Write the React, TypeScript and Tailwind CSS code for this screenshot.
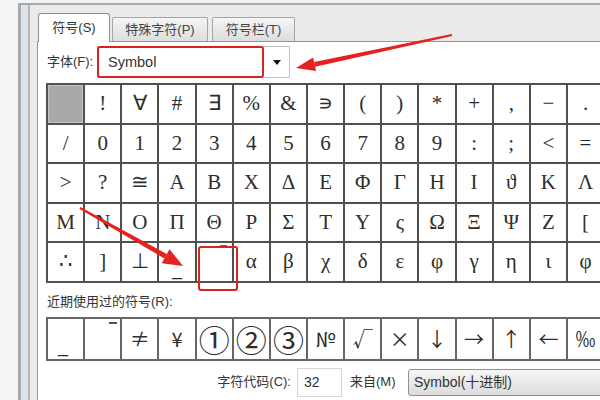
import React from "react";

const rows: string[][] = [
  ["", "!", "∀", "#", "∃", "%", "&", "∍", "(", ")", "*", "+", ",", "−", "."],
  ["/", "0", "1", "2", "3", "4", "5", "6", "7", "8", "9", ":", ";", "<", "="],
  [">", "?", "≅", "A", "B", "X", "Δ", "E", "Φ", "Γ", "H", "I", "ϑ", "K", "Λ"],
  ["M", "N", "O", "Π", "Θ", "P", "Σ", "T", "Y", "ς", "Ω", "Ξ", "Ψ", "Z", "["],
  ["∴", "]", "⊥", "_", "SEL", "α", "β", "χ", "δ", "ε", "φ", "γ", "η", "ι", "φ"],
];

const recent: string[] = ["_", "OVER", "≠", "¥", "①", "②", "③", "№", "√", "×", "↓", "→", "↑", "←", "‰"];

function GridCell({ ch }: { ch: string }) {
  if (ch === "") {
    return <div className="h-[37.5px] bg-[#a9a9a9] border border-[#c4c4c4]" />;
  }
  if (ch === "SEL") {
    return (
      <div className="relative h-[37.5px] bg-white">
        <span className="absolute top-[2px] right-[5px] w-[7px] h-[2px] bg-[#666]" />
      </div>
    );
  }
  if (ch === "_") {
    return (
      <div className="h-[37.5px] bg-white flex items-end justify-center pb-[2px] text-[20px] leading-none font-['Liberation_Serif',serif] text-[#2e2e2e]">
        _
      </div>
    );
  }
  return (
    <div className="h-[37.5px] bg-white flex items-center justify-center text-[21px] leading-none font-['Liberation_Serif',serif] text-[#2e2e2e]">
      {ch}
    </div>
  );
}

function RecentCell({ ch }: { ch: string }) {
  if (ch === "_") {
    return (
      <div className="h-[40px] bg-white flex items-end justify-start pl-[10px] pb-[4px] text-[18px] leading-none font-['Liberation_Sans',sans-serif] text-[#2e2e2e]">
        _
      </div>
    );
  }
  if (ch === "OVER") {
    return (
      <div className="relative h-[40px] bg-white">
        <span className="absolute top-[3px] right-[3px] w-[8px] h-[2px] bg-[#555]" />
      </div>
    );
  }
  const circled = ch === "①" || ch === "②" || ch === "③";
  return (
    <div
      className={
        circled
          ? "h-[40px] bg-white flex items-center justify-center text-[31px] leading-none font-['Noto_Sans_CJK_SC',sans-serif] text-[#2e2e2e]"
          : "h-[40px] bg-white flex items-center justify-center text-[20px] leading-none font-['Noto_Sans_CJK_SC',sans-serif] text-[#2e2e2e]"
      }
    >
      {ch}
    </div>
  );
}

export default function App() {
  return (
    <div className="relative w-[600px] h-[400px] overflow-hidden bg-[#f4f4f4] text-[#333] font-['Liberation_Sans','Noto_Sans_CJK_SC',sans-serif]">
      <div className="h-full pl-[18px] pt-[3px]">
        <div className="h-full border-l-[3px] border-t-2 border-[#a9a9a9] bg-[#dce4ec] pl-[7px]">
          <div className="h-full flex flex-col border-l-2 border-[#b4b4b4] bg-[#ebebeb] pl-[7px]">
            {/* Tabs */}
            <div className="flex items-end h-[36px] shrink-0 pl-px">
              <div className="relative top-px z-10 h-[29px] w-[72px] bg-white border border-b-0 border-[#8e8e8e] rounded-t-[3px] flex items-center justify-center text-[13px] text-[#333] whitespace-nowrap">
                符号(S)
              </div>
              <div className="ml-[2px] h-[24px] w-[96px] border border-b-0 border-[#a5a5a5] rounded-t-[2px] bg-linear-to-b from-[#f5f5f5] to-[#dddddd] flex items-center justify-center text-[13px] text-[#444] whitespace-nowrap">
                特殊字符(P)
              </div>
              <div className="ml-[4px] h-[24px] w-[83px] border border-b-0 border-[#a5a5a5] rounded-t-[2px] bg-linear-to-b from-[#f5f5f5] to-[#dddddd] flex items-center justify-center text-[13px] text-[#444] whitespace-nowrap">
                符号栏(T)
              </div>
            </div>

            {/* Panel */}
            <div className="flex-1 min-w-0 flex flex-col bg-white border-l border-t border-[#959595] pl-[8px]">
              {/* Font row */}
              <div className="mt-[4px] h-[32px] flex items-center shrink-0">
                <div className="ml-px w-[50px] shrink-0 text-[13px] text-[#333] whitespace-nowrap">字体(F):</div>
                <div className="relative flex h-[32px] w-[193px] shrink-0 border border-[#c2c2c2] bg-white">
                  <div className="flex-1 flex items-center pl-[10px] pt-px text-[14.5px] text-[#333] font-['Liberation_Sans',sans-serif]">
                    Symbol
                  </div>
                  <div className="w-[24px] flex items-center justify-center">
                    <svg width="8" height="5" viewBox="0 0 8 5">
                      <polygon points="0,0 8,0 4,5" fill="#111" />
                    </svg>
                  </div>
                  <div className="absolute left-[-1px] top-[-1px] h-[32px] w-[167px] border-2 border-[#d8241c] rounded-[3px]" />
                </div>
              </div>

              {/* Symbol grid */}
              <div className="mt-[5px] w-max shrink-0 grid grid-cols-[repeat(15,35.15px)] gap-[2px] p-[2px] bg-[#505050]">
                {rows.flat().map((ch, i) => (
                  <GridCell key={i} ch={ch} />
                ))}
              </div>

              {/* Recent label */}
              <div className="mt-[11px] h-[16px] leading-[16px] ml-px text-[13px] text-[#333] shrink-0 whitespace-nowrap">
                近期使用过的符号(R):
              </div>

              {/* Recent grid */}
              <div className="mt-[7px] w-max shrink-0 grid grid-cols-[repeat(15,35.15px)] gap-[2px] p-[2px] bg-[#666]">
                {recent.map((ch, i) => (
                  <RecentCell key={i} ch={ch} />
                ))}
              </div>

              {/* Bottom row */}
              <div className="mt-[7px] h-[29px] flex items-center shrink-0">
                <div className="ml-[160px] w-[91px] shrink-0 pr-[6px] text-right text-[13px] text-[#333] whitespace-nowrap">字符代码(C):</div>
                <div className="w-[45px] h-[29px] shrink-0 border border-[#d6d6d6] bg-white flex items-center pl-[6px] text-[14px] text-[#333]">
                  32
                </div>
                <div className="ml-[8px] w-[58px] shrink-0 text-[13px] text-[#333] whitespace-nowrap">来自(M)</div>
                <div className="w-[220px] h-[27px] shrink-0 border border-[#8f8f8f] rounded-[3px] bg-linear-to-b from-[#f6f6f6] to-[#dcdcdc] flex items-center pl-[5px] text-[14px] text-[#333] whitespace-nowrap">
                  Symbol(十进制)
                </div>
              </div>
            </div>
          </div>
        </div>
      </div>

      {/* Selected-cell highlight */}
      <div className="absolute left-[198px] top-[246px] w-[40px] h-[45px] border-2 border-[#d8241c] rounded-[3px]" />

      {/* Red annotation arrows */}
      <svg className="absolute inset-0 pointer-events-none" width="600" height="400" viewBox="0 0 600 400">
        <polygon points="452.2,36 451.8,34 314.1,61.9 315.1,66.7" fill="#e42320" />
        <polygon points="296,68 313.1,57.5 316.1,71.1" fill="#e42320" />
        <polygon points="79.5,208.9 80.5,207.1 166.8,254.0 164.4,258.4" fill="#e42320" />
        <polygon points="183,266 169.5,249.2 161.7,263.2" fill="#e42320" />
      </svg>
    </div>
  );
}
